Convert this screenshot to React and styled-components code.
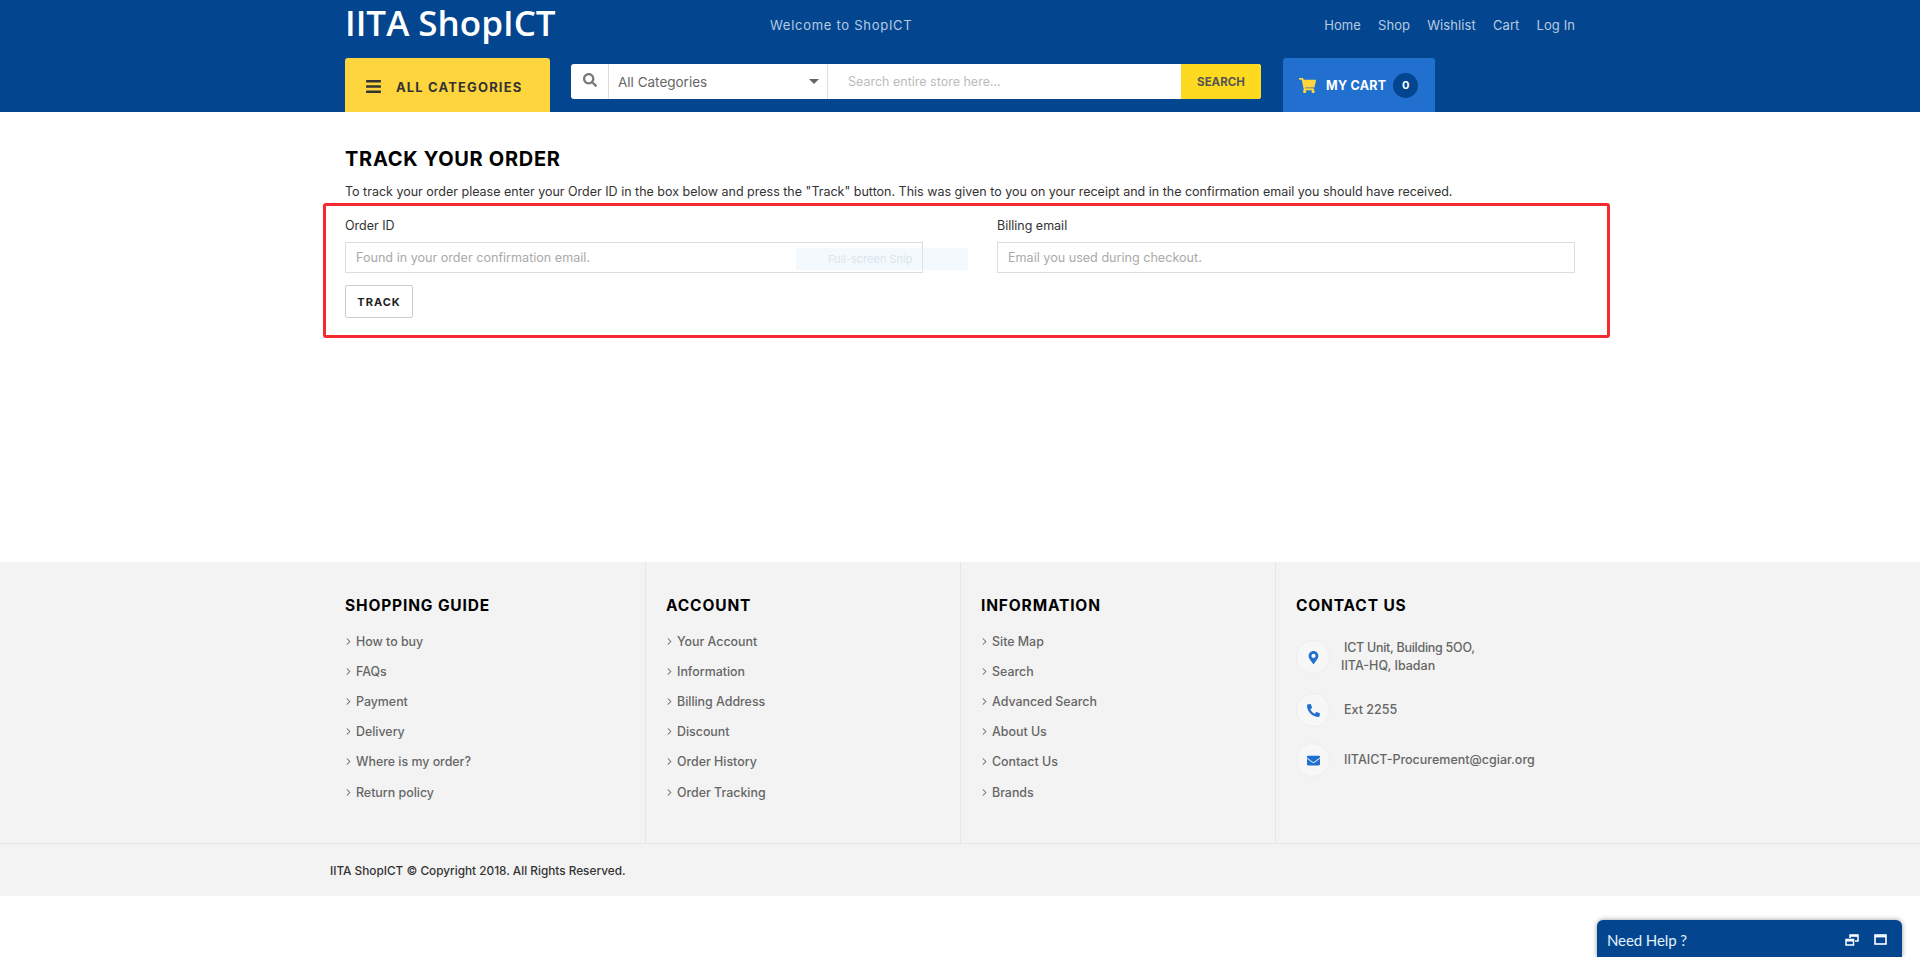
import React from 'react';
import styled, { createGlobalStyle } from 'styled-components';
import { FaBars, FaSearch, FaShoppingCart, FaMapMarkerAlt, FaPhone, FaEnvelope } from 'react-icons/fa';
import { ChevronRight } from 'lucide-react';

const Global = createGlobalStyle`
  * { box-sizing: border-box; }
  body {
    margin: 0;
    background: #fff;
    font-family: Inter, "Noto Sans", sans-serif;
    color: #222;
  }
  #root { height: 957px; overflow: hidden; position: relative; }
`;

const Header = styled.header`
  background: #03468f;
  height: 112px;
`;

const Container = styled.div`
  width: 1260px;
  margin: 0 auto;
  padding: 0 15px;
`;

const TopRow = styled.div`
  display: flex;
  align-items: center;
  height: 58px;
  padding-bottom: 8px;
`;

const Logo = styled.div`
  width: 425px;
  font-family: "Open Sans", sans-serif;
  font-weight: 600;
  font-size: 35px;
  line-height: 44px;
  margin-top: -5px;
  color: #fff;
`;

const Welcome = styled.div`
  flex: 1;
  font-size: 13px;
  letter-spacing: 0.72px;
  color: #b6cbe2;
`;

const TopNav = styled.nav`
  display: flex;
  gap: 17px;
  font-size: 13px;
  letter-spacing: 0.1px;
  color: #b6cbe2;
`;

const BottomRow = styled.div`
  display: flex;
  align-items: flex-start;
`;

const CategoryButton = styled.div`
  width: 205px;
  height: 54px;
  background: #ffd53d;
  border-radius: 3px 3px 0 0;
  display: flex;
  align-items: center;
  padding: 3px 0 0 20px;
  gap: 14px;
  color: #333;
  font-size: 13px;
  font-weight: 700;
  letter-spacing: 1.15px;
  svg { font-size: 17px; }
`;

const SearchBar = styled.div`
  margin: 6px 0 0 21px;
  width: 690px;
  height: 35px;
  background: #fff;
  border-radius: 3px;
  display: flex;
  overflow: hidden;
`;

const SearchIcon = styled.div`
  width: 38px;
  display: flex;
  align-items: center;
  justify-content: center;
  padding-bottom: 3px;
  color: #777;
  font-size: 14px;
  border-right: 1px solid #ddd;
`;

const CategorySelect = styled.div`
  width: 219px;
  display: flex;
  align-items: center;
  justify-content: space-between;
  padding: 0 8px 0 9px;
  font-size: 13.5px;
  color: #666;
  border-right: 1px solid #ddd;
`;

const Caret = styled.span`
  width: 0;
  height: 0;
  border-left: 5px solid transparent;
  border-right: 5px solid transparent;
  border-top: 5px solid #666;
`;

const SearchText = styled.div`
  flex: 1;
  display: flex;
  align-items: center;
  padding-left: 20px;
  font-size: 12.5px;
  color: #bbb;
`;

const SearchButton = styled.div`
  width: 80px;
  background: #fdd91f;
  display: flex;
  align-items: center;
  justify-content: center;
  font-size: 11.5px;
  font-weight: 700;
  color: #555;
`;

const CartButton = styled.div`
  margin-left: 22px;
  width: 152px;
  height: 54px;
  background: #2170d0;
  border-radius: 3px 3px 0 0;
  display: flex;
  align-items: center;
  padding-left: 16px;
  color: #fff;
  font-size: 12.5px;
  font-weight: 700;
  letter-spacing: 0.25px;
  svg { color: #ffd53d; font-size: 17px; margin-right: 10px; }
`;

const CartCount = styled.span`
  margin-left: 7px;
  width: 25px;
  height: 25px;
  border-radius: 50%;
  background: #03468f;
  display: flex;
  align-items: center;
  justify-content: center;
  font-size: 11px;
  letter-spacing: 0;
`;

const Main = styled.main`
  height: 450px;
  padding-top: 35px;
`;

const Title = styled.h1`
  margin: 0;
  font-size: 20px;
  line-height: 24px;
  font-weight: 700;
  letter-spacing: 0.7px;
  color: #000;
`;

const Intro = styled.p`
  margin: 11px 0 0;
  font-size: 12.5px;
  line-height: 20px;
  color: #333;
`;

const TrackForm = styled.form`
  position: relative;
  margin: 1px -35px 0 -22px;
  height: 135px;
  padding: 10px 33px 0 19px;
  border: 3px solid #f52a2f;
  border-radius: 3px;
`;

const FieldRow = styled.div`
  display: grid;
  grid-template-columns: 578px 578px;
  column-gap: 74px;
`;

const Label = styled.div`
  font-size: 12.5px;
  line-height: 20px;
  color: #333;
`;

const FakeInput = styled.div`
  margin-top: 6px;
  height: 31px;
  padding-left: 10px;
  border: 1px solid #ddd;
  display: flex;
  align-items: center;
  font-size: 12.6px;
  color: #aaa;
`;

const TrackButton = styled.div`
  margin-top: 12px;
  width: 68px;
  height: 33px;
  border: 1px solid #ccc;
  border-radius: 2px;
  display: flex;
  align-items: center;
  justify-content: center;
  font-size: 11px;
  font-weight: 700;
  letter-spacing: 1px;
  color: #222;
`;

const SnipHint = styled.div`
  position: absolute;
  left: 470px;
  top: 42px;
  width: 172px;
  height: 22px;
  background: rgba(225, 240, 250, 0.4);
  display: flex;
  align-items: center;
  padding-left: 32px;
  font-size: 11px;
  color: #dbe5ec;
`;

const Footer = styled.footer`
  background: #f3f3f3;
  height: 334px;
`;

const Columns = styled.div`
  display: grid;
  grid-template-columns: 316px 315px 315px 314px;
  width: 1260px;
  height: 281px;
  margin: 0 auto;
`;

const Column = styled.div`
  padding: 33px 0 0 ${({ $first }) => ($first ? '15px' : '20px')};
  border-right: ${({ $last }) => ($last ? 'none' : '1px solid #e6e6e6')};
`;

const ColumnTitle = styled.h4`
  margin: 0 0 ${({ $gap }) => $gap}px;
  font-size: 15.5px;
  line-height: 22px;
  font-weight: 700;
  letter-spacing: 0.85px;
  color: #000;
`;

const LinkList = styled.ul`
  list-style: none;
  margin: 0;
  padding: 0;
`;

const LinkItem = styled.li`
  height: 30.2px;
  display: flex;
  align-items: center;
  font-size: 12.4px;
  font-weight: 500;
  color: #666;
  svg { margin: 0 2px 0 -2px; }
`;

const ContactRow = styled.div`
  display: flex;
  align-items: center;
  gap: ${({ $tight }) => ($tight ? '11px' : '14px')};
  height: 34px;
  margin-bottom: ${({ $gap }) => $gap}px;
  font-size: 12.5px;
  font-weight: 500;
  line-height: 18px;
  color: #666;
`;

const ContactCircle = styled.span`
  flex: none;
  width: 34px;
  height: 34px;
  border-radius: 50%;
  background: #f7f7f7;
  border: 1px solid #eee;
  display: flex;
  align-items: center;
  justify-content: center;
  color: #2170d0;
  font-size: 13px;
`;

const PhoneGlyph = styled(FaPhone)`
  transform: scaleX(-1);
`;

const Indented = styled.span`
  display: block;
  padding-left: 3px;
  letter-spacing: -0.27px;
`;

const CopyRow = styled.div`
  border-top: 1px solid #e6e6e6;
  height: 53px;
`;

const CopyText = styled.div`
  width: 1260px;
  margin: 0 auto;
  line-height: 55px;
  font-size: 11.8px;
  font-weight: 500;
  color: #333;
`;

const HelpWidget = styled.div`
  position: absolute;
  right: 18px;
  bottom: 0;
  width: 305px;
  height: 37px;
  background: #03468f;
  border-radius: 6px 6px 0 0;
  box-shadow: 0 0 5px rgba(0, 0, 0, 0.4);
  display: flex;
  align-items: center;
  padding: 2px 15px 0 10px;
  font-family: Lato, sans-serif;
  font-size: 15px;
  letter-spacing: -0.1px;
  color: #e4f1fb;
`;

const HelpLabel = styled.span`
  flex: 1;
`;

const HelpIcons = styled.span`
  display: flex;
  gap: 15px;
  align-items: center;
`;

const nav = ['Home', 'Shop', 'Wishlist', 'Cart', 'Log In'];
const footerLinks = [
  { title: 'SHOPPING GUIDE', links: ['How to buy', 'FAQs', 'Payment', 'Delivery', 'Where is my order?', 'Return policy'] },
  { title: 'ACCOUNT', links: ['Your Account', 'Information', 'Billing Address', 'Discount', 'Order History', 'Order Tracking'] },
  { title: 'INFORMATION', links: ['Site Map', 'Search', 'Advanced Search', 'About Us', 'Contact Us', 'Brands'] },
];

const App = () => (
  <>
    <Global />
    <Header>
      <Container>
        <TopRow>
          <Logo>IITA ShopICT</Logo>
          <Welcome>Welcome to ShopICT</Welcome>
          <TopNav>
            {nav.map((n) => <span key={n}>{n}</span>)}
          </TopNav>
        </TopRow>
        <BottomRow>
          <CategoryButton><FaBars />ALL CATEGORIES</CategoryButton>
          <SearchBar>
            <SearchIcon><FaSearch /></SearchIcon>
            <CategorySelect>All Categories<Caret /></CategorySelect>
            <SearchText>Search entire store here...</SearchText>
            <SearchButton>SEARCH</SearchButton>
          </SearchBar>
          <CartButton><FaShoppingCart />MY CART<CartCount>0</CartCount></CartButton>
        </BottomRow>
      </Container>
    </Header>
    <Main>
      <Container>
        <Title>TRACK YOUR ORDER</Title>
        <Intro>To track your order please enter your Order ID in the box below and press the "Track" button. This was given to you on your receipt and in the confirmation email you should have received.</Intro>
        <TrackForm>
          <FieldRow>
            <div>
              <Label>Order ID</Label>
              <FakeInput>Found in your order confirmation email.</FakeInput>
            </div>
            <div>
              <Label>Billing email</Label>
              <FakeInput>Email you used during checkout.</FakeInput>
            </div>
          </FieldRow>
          <TrackButton>TRACK</TrackButton>
          <SnipHint>Full-screen Snip</SnipHint>
        </TrackForm>
      </Container>
    </Main>
    <Footer>
      <Columns>
        {footerLinks.map((col, i) => (
          <Column key={col.title} $first={i === 0}>
            <ColumnTitle $gap={9}>{col.title}</ColumnTitle>
            <LinkList>
              {col.links.map((l) => <LinkItem key={l}><ChevronRight size={11} strokeWidth={2.2} />{l}</LinkItem>)}
            </LinkList>
          </Column>
        ))}
        <Column $last>
          <ColumnTitle $gap={23}>CONTACT US</ColumnTitle>
          <ContactRow $gap={19} $tight>
            <ContactCircle><FaMapMarkerAlt /></ContactCircle>
            <span><Indented>ICT Unit, Building 5OO,</Indented>IITA-HQ, Ibadan</span>
          </ContactRow>
          <ContactRow $gap={16}>
            <ContactCircle><PhoneGlyph /></ContactCircle>
            <span>Ext 2255</span>
          </ContactRow>
          <ContactRow $gap={0}>
            <ContactCircle><FaEnvelope /></ContactCircle>
            <span>IITAICT-Procurement@cgiar.org</span>
          </ContactRow>
        </Column>
      </Columns>
      <CopyRow>
        <CopyText>IITA ShopICT © Copyright 2018. All Rights Reserved.</CopyText>
      </CopyRow>
    </Footer>
    <HelpWidget>
      <HelpLabel>Need Help ?</HelpLabel>
      <HelpIcons>
        <svg width="14" height="12" viewBox="0 0 14 12" fill="none" stroke="#fff">
          <path d="M1 5.5h7.5v5.5H1z" strokeWidth="1.5" />
          <path d="M1 6.5h7.5" strokeWidth="2" />
          <path d="M5 4V1h8v6h-3" strokeWidth="1.5" />
          <path d="M5 1.8h8" strokeWidth="2" />
        </svg>
        <svg width="13" height="11" viewBox="0 0 13 11" fill="none" stroke="#fff">
          <rect x="1" y="1" width="11" height="9" strokeWidth="1.6" />
          <path d="M1 2.4h11" strokeWidth="2" />
        </svg>
      </HelpIcons>
    </HelpWidget>
  </>
);

export default App;
